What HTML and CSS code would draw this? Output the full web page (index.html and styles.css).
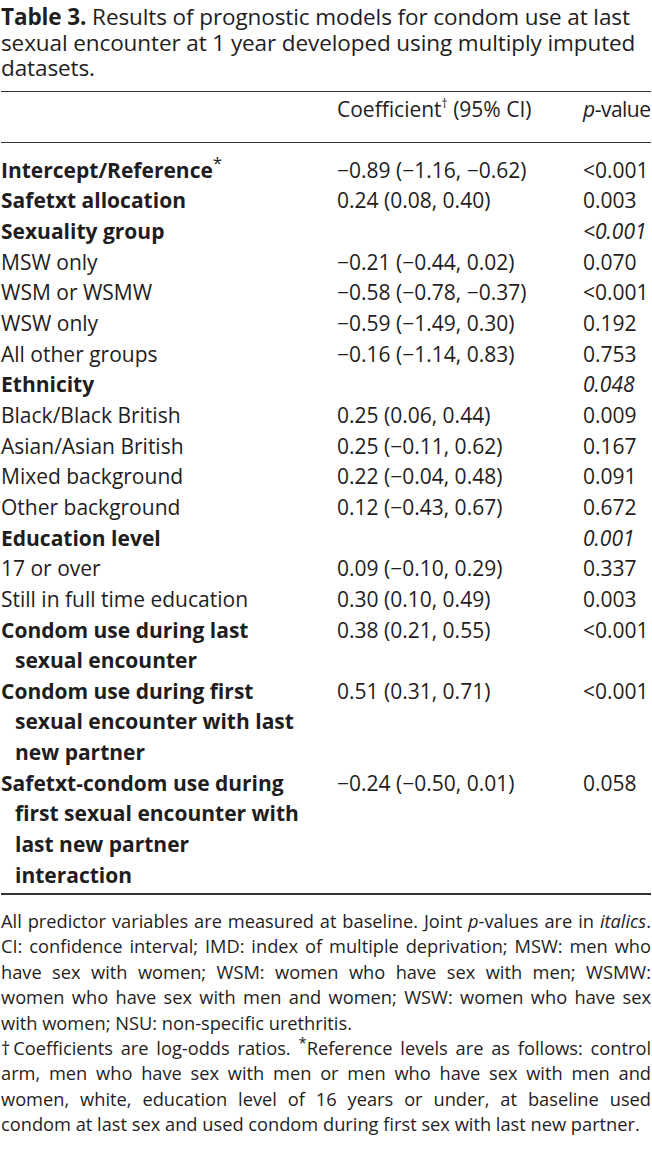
FILE: index.html
```html
<!DOCTYPE html>
<html>
<head>
<meta charset="utf-8">
<link rel="stylesheet" href="styles.css">
</head>
<body>
<div class="page">
  <p class="caption"><b>Table 3.</b> Results of prognostic models for condom use at last sexual encounter at 1 year developed using multiply imputed datasets.</p>
  <table class="results">
    <colgroup>
      <col class="col-label">
      <col class="col-coef">
      <col class="col-p">
    </colgroup>
    <thead>
      <tr>
        <th></th>
        <th>Coefficient<sup class="dag">†</sup> (95% CI)</th>
        <th class="h-p"><i>p</i>-value</th>
      </tr>
    </thead>
    <tbody>
      <tr class="first"><td class="c-label"><b>Intercept/Reference<sup class="ast">*</sup></b></td><td>−0.89 (−1.16, −0.62)</td><td>&lt;0.001</td></tr>
      <tr><td class="c-label"><b>Safetxt allocation</b></td><td>0.24 (0.08, 0.40)</td><td>0.003</td></tr>
      <tr><td class="c-label"><b>Sexuality group</b></td><td></td><td><i>&lt;0.001</i></td></tr>
      <tr><td class="c-label">MSW only</td><td>−0.21 (−0.44, 0.02)</td><td>0.070</td></tr>
      <tr><td class="c-label">WSM or WSMW</td><td>−0.58 (−0.78, −0.37)</td><td>&lt;0.001</td></tr>
      <tr><td class="c-label">WSW only</td><td>−0.59 (−1.49, 0.30)</td><td>0.192</td></tr>
      <tr><td class="c-label">All other groups</td><td>−0.16 (−1.14, 0.83)</td><td>0.753</td></tr>
      <tr><td class="c-label"><b>Ethnicity</b></td><td></td><td><i>0.048</i></td></tr>
      <tr><td class="c-label">Black/Black British</td><td>0.25 (0.06, 0.44)</td><td>0.009</td></tr>
      <tr><td class="c-label">Asian/Asian British</td><td>0.25 (−0.11, 0.62)</td><td>0.167</td></tr>
      <tr><td class="c-label">Mixed background</td><td>0.22 (−0.04, 0.48)</td><td>0.091</td></tr>
      <tr><td class="c-label">Other background</td><td>0.12 (−0.43, 0.67)</td><td>0.672</td></tr>
      <tr><td class="c-label"><b>Education level</b></td><td></td><td><i>0.001</i></td></tr>
      <tr><td class="c-label">17 or over</td><td>0.09 (−0.10, 0.29)</td><td>0.337</td></tr>
      <tr><td class="c-label">Still in full time education</td><td>0.30 (0.10, 0.49)</td><td>0.003</td></tr>
      <tr><td class="c-label"><b>Condom use during last<br>sexual encounter</b></td><td>0.38 (0.21, 0.55)</td><td>&lt;0.001</td></tr>
      <tr><td class="c-label"><b>Condom use during first<br>sexual encounter with last<br>new partner</b></td><td>0.51 (0.31, 0.71)</td><td>&lt;0.001</td></tr>
      <tr class="last"><td class="c-label"><b>Safetxt-condom use during<br>first sexual encounter with<br>last new partner<br>interaction</b></td><td>−0.24 (−0.50, 0.01)</td><td>0.058</td></tr>
    </tbody>
  </table>
  <div class="notes">
    <p>All predictor variables are measured at baseline. Joint <i>p</i>-values are in <i>italics</i>. CI: confidence interval; IMD: index of multiple deprivation; MSW: men who have sex with women; WSM: women who have sex with men; WSMW: women who have sex with men and women; WSW: women who have sex with women; NSU: non-specific urethritis.</p>
    <p>†Coefficients are log-odds ratios. <sup class="ast">*</sup>Reference levels are as follows: control arm, men who have sex with men or men who have sex with men and women, white, education level of 16 years or under, at baseline used condom at last sex and used condom during first sex with last new partner.</p>
  </div>
</div>
</body>
</html>
```

FILE: styles.css
```css
html, body {
  margin: 0;
  padding: 0;
  background: #ffffff;
}
.page {
  width: 650px;
  padding: 0 1px;
  color: #1f1d1e;
  font-family: "Open Sans", Lato, sans-serif;
}
.caption {
  margin: 4px 0 0 0;
  font-size: 22.5px;
  line-height: 25.5px;
  letter-spacing: -0.1px;
}
.results {
  width: 650px;
  table-layout: fixed;
  margin-top: 10.5px;
  border-collapse: collapse;
  font-size: 21px;
  line-height: 30.65px;
  border-top: 1.5px solid #333;
  border-bottom: 2px solid #333;
}
.col-label { width: 336px; }
.col-coef { width: 246px; }
.col-p { width: 68px; }
.results th {
  font-weight: normal;
  text-align: left;
  white-space: nowrap;
  padding: 1.5px 0 17.5px 0;
  border-bottom: 1.5px solid #333;
}
.results th.h-p {
  letter-spacing: -0.5px;
}
.results td {
  vertical-align: top;
  white-space: nowrap;
  padding: 0;
}
.results tr.first td {
  padding-top: 12px;
}
.results tr.last td {
  padding-bottom: 3px;
}
.results td.c-label {
  padding-left: 14px;
  text-indent: -14px;
}
.dag {
  font-size: 12px;
  vertical-align: 9px;
  line-height: 0;
}
.ast {
  font-size: 17px;
  vertical-align: 9px;
  line-height: 0;
  font-weight: normal;
}
.notes {
  margin-top: 12.5px;
  font-size: 18.25px;
  line-height: 25.4px;
  text-align: justify;
}
.notes p {
  margin: 0;
}
.notes .ast {
  font-size: 15px;
  vertical-align: 7px;
}
```
